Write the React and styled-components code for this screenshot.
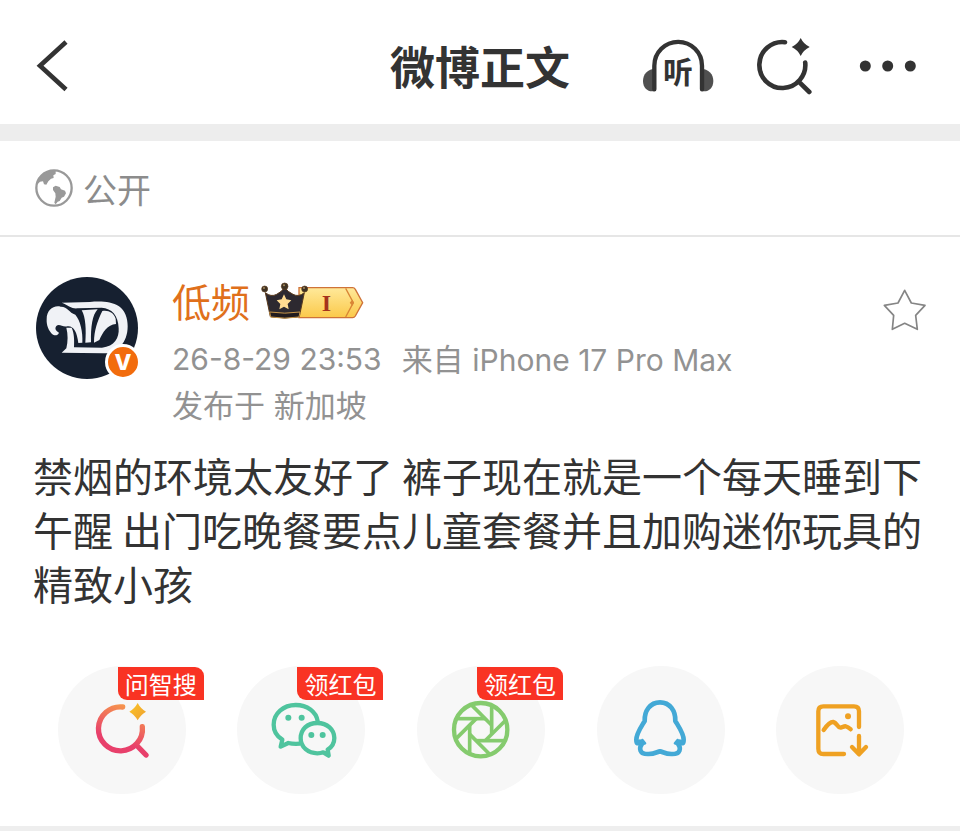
import React, { useState } from "react";
import styled, { createGlobalStyle } from "styled-components";

const shares = [
  { id: "search", label: "智搜", tag: "问智搜", x: 51, Icon: SearchArt },
  { id: "wechat", label: "微信", tag: "领红包", x: 591, Icon: WechatArt },
  { id: "moments", label: "朋友圈", tag: "领红包", x: 51, Icon: MomentsArt },
  { id: "qq", label: "QQ", x: 588, Icon: QQArt },
  { id: "image", label: "保存图片", x: 168, Icon: ImageArt },
];

export default function App() {
  const [starred, setStarred] = useState(false);

  return (
    <Page>
      <GlobalStyle />
      <Header>
        <BarButton aria-label="返回">
          <svg width="32" height="52" viewBox="0 0 32 52">
            <path d="M30 2 L4 25.700 L30 49.500" fill="none" stroke="#333" strokeWidth="4.600" />
          </svg>
        </BarButton>
        <Title>微博正文</Title>
        <Tools>
          <BarButton aria-label="听">
            <Headphones />
          </BarButton>
          <BarButton aria-label="搜索">
            <svg width="58" height="58" viewBox="0 0 58 58">
              <path
                d="M29 5.200 A23 23 0 1 0 49.200 25.500 M43 44.800 L53.300 55"
                fill="none"
                stroke="#333"
                strokeWidth="4.600"
                strokeLinecap="round"
              />
              <path d="M44.700 1 Q47.500 7 53.700 10 Q47.500 13 44.700 19 Q41.900 13 35.700 10 Q41.900 7 44.700 1Z" fill="#333" />
            </svg>
          </BarButton>
          <BarButton aria-label="更多">
            <svg width="68" height="58" viewBox="0 0 68 58" fill="#333">
              <circle cx="9.300" cy="29" r="5.500" />
              <circle cx="31.700" cy="29" r="5.500" />
              <circle cx="54.300" cy="29" r="5.500" />
            </svg>
          </BarButton>
        </Tools>
      </Header>

      <Visibility>
        <Globe />
        公开
      </Visibility>

      <Post>
        <Author>
          <AvatarBox>
            <Avatar />
            <Verified>V</Verified>
          </AvatarBox>
          <Info>
            <NameRow>
              <Name href="#user">低频</Name>
              <Crown />
            </NameRow>
            <Meta>
              <Latin>26-8-29 23:53</Latin>
              <span>
                来自 <Latin>iPhone 17 Pro Max</Latin>
              </span>
            </Meta>
            <Meta>发布于 新加坡</Meta>
          </Info>
          <StarButton
            aria-label="收藏"
            aria-pressed={starred}
            onClick={() => setStarred(!starred)}
          >
            <svg width="46" height="46" viewBox="63 51 138 138">
              <path
                d="M134 58 L154 96 L195 103 L167 133 L172 175 L134 157 L97 175 L101 133 L73 103 L114 96Z"
                fill={starred ? "#ffb400" : "none"}
                stroke="#858585"
                strokeWidth="5"
                strokeLinejoin="round"
              />
            </svg>
          </StarButton>
        </Author>
        <Content>
          禁烟的环境太友好了 裤子现在就是一个每天睡到下午醒 出门吃晚餐要点儿童套餐并且加购迷你玩具的精致小孩
        </Content>
      </Post>

      <ShareList>
        {shares.map(({ id, label, tag, x, Icon }) => (
          <ShareButton key={id} aria-label={label}>
            <svg width="128" height="128" viewBox={`${x} 46 384 384`}>
              <Icon />
            </svg>
            {tag && <Tag>{tag}</Tag>}
          </ShareButton>
        ))}
      </ShareList>
      <Band />
    </Page>
  );
}

function Headphones() {
  return (
    <svg width="72" height="58" viewBox="66 48 216 174">
      <path d="M108 143 C82 143 69 160 69 180 C69 200 82 211 96 211 C104 211 108 207 108 200Z" fill="#505050" />
      <path d="M241 143 C267 143 280 160 280 180 C280 200 267 211 253 211 C245 211 241 207 241 200Z" fill="#505050" />
      <path
        d="M103 205 V134 A71.500 71.500 0 0 1 246 134 V205"
        fill="none"
        stroke="#333"
        strokeWidth="13"
        strokeLinecap="round"
      />
      <HeadText x="174" y="185" textAnchor="middle">听</HeadText>
    </svg>
  );
}

function Globe() {
  return (
    <svg width="38" height="38" viewBox="14 15 114 114">
      <circle cx="71" cy="72" r="53" fill="none" stroke="#999" strokeWidth="7" />
      <path d="M20 62 C25 35 50 16 76 18 L76 30 L69 34 L70 42 L62 44 L54 52 L48 62 L41 61 L38 52 L29 53Z" fill="#999" />
      <path d="M68 70 L76 65 L88 69 L92 76 L104 80 L107 88 L101 98 L94 101 L88 111 L82 113 L76 121 L72 116 L76 98 L75 88 L68 78Z" fill="#999" />
    </svg>
  );
}

function Avatar() {
  return (
    <svg width="102" height="102" viewBox="48 51 306 306">
      <circle cx="201" cy="204" r="153" fill="#162030" />
      <g fill="#f0f2f6">
        <path d="M80 178 C80 150 100 135 122 140 C142 139 147 158 166 164 C181 182 189 215 187 248 L175 249 C171 216 161 197 142 199 C128 203 118 189 109 198 C103 206 108 213 117 218 C113 228 103 228 96 222 C86 212 79 196 80 178Z" />
        <path
          fillRule="evenodd"
          d="M125 128 L210 126 C240 123 274 124 297 139 C315 152 323 174 323 199 C323 250 290 282 250 280 L125 278 L139 265 C144 245 144 222 139 203 L155 203 C163 220 163 242 162 262 L246 263 C284 260 298 233 296 205 C295 165 275 145 245 143 L172 145 C156 147 143 135 125 128Z"
        />
        <path d="M185 151 L233 148 C217 165 212 200 213 247 L196 248 C199 210 197 171 185 151Z" />
        <path d="M247 153 C266 150 281 158 287 176 L288 192 C262 194 249 216 238 240 L222 248 C222 210 233 182 247 153Z" />
      </g>
    </svg>
  );
}

function Crown() {
  return (
    <svg width="104" height="42" viewBox="36 36 312 126">
      <defs>
        <linearGradient id="gold" x1="0" y1="0" x2="0" y2="1">
          <stop offset="0" stopColor="#ffe99a" />
          <stop offset="1" stopColor="#fbc94a" />
        </linearGradient>
      </defs>
      <path
        d="M150 53 H311 Q316 53 319 58 L341 98 L319 138 Q316 143 311 143 H150Z"
        fill="url(#gold)"
        stroke="#cf7338"
        strokeWidth="4"
      />
      <path d="M290 55 L313 98 L290 141" fill="none" stroke="#d98636" strokeWidth="4" />
      <path d="M302 98 L310 89 L315 98 L310 107Z" fill="#d98636" />
      <path
        d="M49 68 Q66 82 83 73 Q98 66 107 52 Q116 66 132 73 Q149 82 166 68 L151 140 Q107 148 64 140Z"
        fill="#2d2930"
        stroke="#5b3b1d"
        strokeWidth="3"
      />
      <path d="M62 126 Q107 133 153 126 L150 141 Q107 148 65 141Z" fill="#211b1e" stroke="#c59448" strokeWidth="3" />
      <g fill="#3e3224" stroke="#5b3b1d" strokeWidth="2">
        <circle cx="47" cy="57" r="9" />
        <circle cx="107" cy="49" r="10" />
        <circle cx="167" cy="57" r="9" />
      </g>
      <g fill="#a98b5b">
        <circle cx="45" cy="54" r="3" />
        <circle cx="105" cy="46" r="3" />
        <circle cx="165" cy="54" r="3" />
      </g>
      <path d="M105 73 L112 88 L127 91 L116 102 L119 118 L105 110 L91 118 L94 102 L83 91 L98 88Z" fill="#ffdb91" />
      <LevelText x="232" y="122" textAnchor="middle">I</LevelText>
    </svg>
  );
}

function SearchArt() {
  return (
    <>
      <defs>
        <linearGradient id="warm" gradientUnits="userSpaceOnUse" x1="270" y1="165" x2="230" y2="270">
          <stop offset="0" stopColor="#f79a4c" />
          <stop offset="1" stopColor="#e8406b" />
        </linearGradient>
        <linearGradient id="spark" x1="0" y1="0" x2="1" y2="1">
          <stop offset="0" stopColor="#fbc526" />
          <stop offset="1" stopColor="#ee9f31" />
        </linearGradient>
      </defs>
      <path
        d="M245 169 A66 66 0 1 0 304 228 M286 283 L315 313"
        fill="none"
        stroke="url(#warm)"
        strokeWidth="16"
        strokeLinecap="round"
      />
      <path d="M290 157 Q299 174 315 183 Q299 192 290 209 Q281 192 265 183 Q281 174 290 157Z" fill="url(#spark)" />
    </>
  );
}

function WechatArt() {
  return (
    <>
      <g fill="none" stroke="#4fc49e" strokeWidth="13" strokeLinejoin="round">
        <path d="M833 212 C829 182 801 163 767 163 C730 163 701 189 701 222 C701 243 711 257 727 267 L722 288 L745 277 C757 280 766 280 780 279" />
        <path d="M832 217 C801 217 782 237 782 263 C782 290 805 308 832 308 C839 308 845 307 850 305 L866 315 L863 297 C876 289 883 277 883 262 C883 237 862 217 832 217Z" />
      </g>
      <g fill="#4fc49e">
        <circle cx="745" cy="201" r="9" />
        <circle cx="785" cy="201" r="9" />
        <circle cx="814" cy="253" r="9" />
        <circle cx="848" cy="253" r="9" />
      </g>
    </>
  );
}

function MomentsArt() {
  const blades = [0, 45, 90, 135, 180, 225, 270, 315];
  return (
    <g fill="none" stroke="#85cb6e" strokeWidth="13">
      <circle cx="242" cy="237" r="80" />
      {blades.map((deg) => (
        <path key={deg} d="M256 204 H172" strokeWidth="11" transform={`rotate(${deg} 242 237)`} />
      ))}
    </g>
  );
}

function QQArt() {
  return (
    <g fill="none" stroke="#43a9d6" strokeWidth="14" strokeLinecap="round" strokeLinejoin="round">
      <path d="M777 155 C747 155 730 181 731 211 C719 231 706 249 706 267 C706 281 711 279 717 273 L722 281 C714 292 715 310 740 310 C760 311 769 303 777 302 C785 303 794 311 814 310 C839 310 840 292 832 281 L837 273 C843 279 848 281 848 267 C848 249 835 231 823 211 C824 181 807 155 777 155Z" />
      <path d="M724 268 L732 278 L720 282Z M830 268 L822 278 L834 282Z" strokeWidth="8" fill="#43a9d6" />
    </g>
  );
}

function ImageArt() {
  return (
    <g fill="none" stroke="#efa122" strokeWidth="13" strokeLinecap="round" strokeLinejoin="round">
      <path d="M417 229 V182 Q417 167 402 167 H310 Q295 167 295 182 V294 Q295 310 310 310 H372" />
      <path d="M311 238 C322 222 332 213 340 214 C351 216 352 232 362 231 C371 229 376 220 392 236" />
      <path d="M417 256 V308 M396 289 L417 311 L438 289" />
      <circle cx="384" cy="197" r="9" fill="#efa122" stroke="none" />
    </g>
  );
}

const GlobalStyle = createGlobalStyle`
  body {
    margin: 0;
    background: #fff;
    font-family: Inter, "Noto Sans CJK SC", sans-serif;
  }
  button {
    padding: 0;
    border: 0;
    background: none;
    cursor: pointer;
  }
  svg {
    display: block;
  }
`;

const Page = styled.main`
  background: #fff;
`;

const Header = styled.header`
  display: grid;
  grid-template-columns: 1fr auto 1fr;
  align-items: center;
  padding: 37px 36px 29px;
  border-bottom: 17px solid #ededed;
`;

const Title = styled.h1`
  margin: 0;
  color: #333;
  font-family: "Noto Sans CJK SC", sans-serif;
  font-size: 45px;
  font-weight: 700;
  line-height: 58px;
`;

const Tools = styled.div`
  display: flex;
  justify-content: flex-end;
  gap: 42px;
`;

const BarButton = styled.button`
  justify-self: start;
`;

const HeadText = styled.text`
  fill: #333;
  font-family: "Noto Sans CJK SC", sans-serif;
  font-size: 90px;
  font-weight: 700;
`;

const Visibility = styled.div`
  display: flex;
  align-items: center;
  gap: 10px;
  height: 94px;
  padding: 0 35px;
  border-bottom: 2px solid #e6e6e6;
  color: #8c8c8c;
  font-size: 34px;
`;

const Post = styled.article`
  padding: 40px 33px 0;
`;

const Author = styled.div`
  display: flex;
  align-items: flex-start;
  padding-left: 3px;
`;

const AvatarBox = styled.div`
  position: relative;
  margin-right: 34px;
`;

const Verified = styled.span`
  position: absolute;
  left: 69px;
  top: 67px;
  width: 30px;
  height: 30px;
  border: 3px solid #fff;
  border-radius: 50%;
  background: #f26c0d;
  color: #fff;
  font-size: 22px;
  font-weight: 800;
  line-height: 30px;
  text-align: center;
`;

const Info = styled.div`
  flex: 1;
`;

const NameRow = styled.div`
  display: flex;
  align-items: center;
  gap: 11px;
  height: 52px;
  margin-bottom: 8px;
`;

const Name = styled.a`
  color: #e0701b;
  font-size: 39px;
  line-height: 52px;
  text-decoration: none;
`;

const Meta = styled.div`
  display: flex;
  gap: 20px;
  color: #929292;
  font-size: 31px;
  line-height: 45px;
`;

const Latin = styled.span`
  font-size: 30px;
`;

const LevelText = styled.text`
  fill: #a5331c;
  font-family: "Liberation Serif", serif;
  font-size: 72px;
  font-weight: 700;
`;

const StarButton = styled.button`
  margin-top: 11px;
`;

const Content = styled.p`
  margin: 20px 0 0;
  color: #333;
  font-family: "Noto Sans CJK SC", sans-serif;
  font-size: 40px;
  line-height: 54px;
`;

const ShareList = styled.div`
  display: grid;
  grid-template-columns: repeat(5, 1fr);
  justify-items: center;
  padding: 56px 30px 32px 32px;
`;

const ShareButton = styled.button`
  position: relative;
  width: 128px;
  height: 128px;
  border-radius: 50%;
  background: #f7f7f7;
`;

const Tag = styled.span`
  position: absolute;
  left: 60px;
  top: 1px;
  padding: 0 7px;
  border-radius: 0 9px 0 9px;
  background: #f93323;
  color: #fff;
  font-family: "Noto Sans CJK SC", sans-serif;
  font-size: 24px;
  line-height: 33px;
  white-space: nowrap;
`;

const Band = styled.div`
  height: 6px;
  background: #eee;
`;
